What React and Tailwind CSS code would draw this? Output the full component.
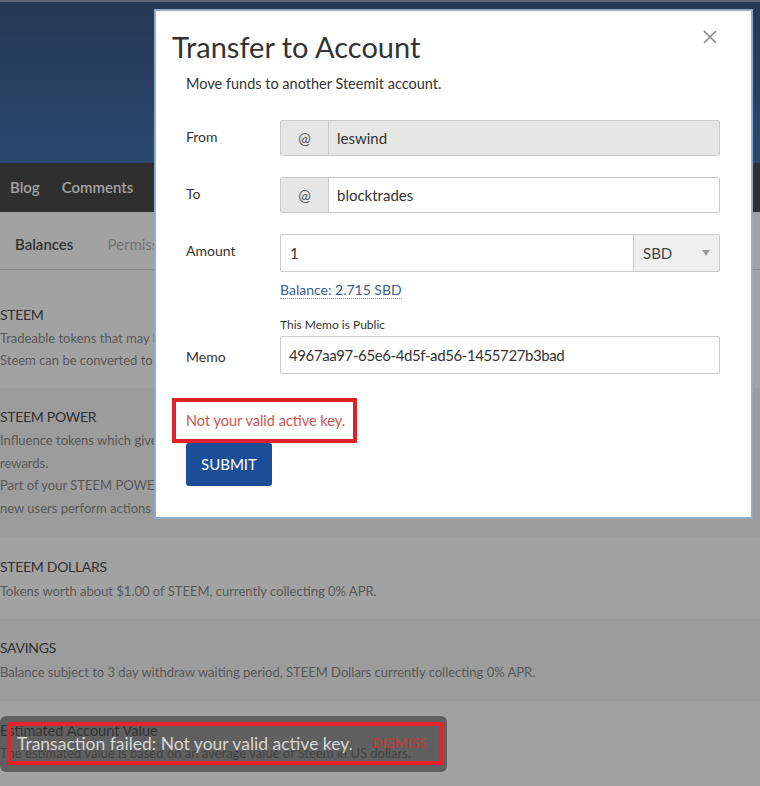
import React from "react";

function Row({ h, pt, dark, title, titleCls, lines, lh, mt }) {
  return (
    <div className={`${dark ? "bg-[#9c9c9c]" : "bg-[#a2a2a2]"} ${h} ${pt}`}>
      <div className={`${titleCls} leading-[20px] text-[#313131] whitespace-nowrap`}>{title}</div>
      <div className={`${mt} text-[13px] ${lh} text-[#585858] whitespace-nowrap`}>
        {lines.map((l, i) => (
          <div key={i}>{l}</div>
        ))}
      </div>
    </div>
  );
}

export default function App() {
  const caps = "text-[14px] tracking-[-0.3px]";
  return (
    <div className="relative w-[760px] h-[786px] overflow-hidden bg-[#a2a2a2] font-['Lato',sans-serif]">
      <header className="h-[163px] border-t-2 border-[#5f6773] bg-gradient-to-b from-[#243954] to-[#2a4870]" />
      <nav className="h-[49px] bg-[#2f2f2f] flex items-center gap-[22px] pl-[10px] text-[15px] font-semibold text-[#a3a3a3]">
        <span>Blog</span>
        <span>Comments</span>
      </nav>
      <div className="h-[58px] border-b border-[#8d8d8d] flex items-center gap-[34px] pl-[15px] pt-[7px] text-[15px]">
        <span className="font-semibold text-[#333]">Balances</span>
        <span className="text-[#737373]">Permissions</span>
      </div>
      <Row
        h="h-[118px]"
        pt="pt-[35px]"
        title="STEEM"
        titleCls={caps}
        mt="mt-[2px]"
        lh="leading-[22px]"
        lines={[
          "Tradeable tokens that may be transferred anywhere at anytime.",
          "Steem can be converted to STEEM POWER in a process called powering up.",
        ]}
      />
      <Row
        h="h-[150px]"
        pt="pt-[19px]"
        dark
        title="STEEM POWER"
        titleCls={caps}
        mt="mt-[2px]"
        lh="leading-[22.5px]"
        lines={[
          "Influence tokens which give you more control over post payouts and allow you to earn on curation",
          "rewards.",
          "Part of your STEEM POWER is currently delegated. Delegation is donated for influence or to help",
          "new users perform actions on steemit. Your delegation amount can fluctuate.",
        ]}
      />
      <Row
        h="h-[81px]"
        pt="pt-[19px]"
        title="STEEM DOLLARS"
        titleCls={caps}
        mt="mt-[3px]"
        lh="leading-[22px]"
        lines={["Tokens worth about $1.00 of STEEM, currently collecting 0% APR."]}
      />
      <Row
        h="h-[82px]"
        pt="pt-[19px]"
        dark
        title="SAVINGS"
        titleCls={caps}
        mt="mt-[3px]"
        lh="leading-[22px]"
        lines={["Balance subject to 3 day withdraw waiting period, STEEM Dollars currently collecting 0% APR."]}
      />
      <Row
        h="h-[90px]"
        pt="pt-[20px]"
        title="Estimated Account Value"
        titleCls="text-[14.5px]"
        mt="mt-[1px]"
        lh="leading-[22px]"
        lines={["The estimated value is based on an average value of Steem in US dollars."]}
      />

      {/* Modal */}
      <div className="absolute left-[154px] top-[9px] w-[599px] h-[510px] bg-white border-2 border-[#93abcb] pt-[18px] pl-[16px] pr-[31px]">
        <svg
          className="absolute right-[34px] top-[19px] w-[14px] h-[14px]"
          viewBox="0 0 14 14"
          fill="none"
          stroke="#8a8a8a"
          strokeWidth="1.6"
        >
          <path d="M1 1L13 13M13 1L1 13" />
        </svg>
        <h2 className="text-[29px] leading-[36px] text-[#333] font-normal">Transfer to Account</h2>
        <div className="pl-[14px]">
          <p className="mt-[9px] text-[14.5px] leading-[20px] text-[#333]">
            Move funds to another Steemit account.
          </p>

          <div className="mt-[26px] grid grid-cols-[94px_440px] items-center text-[14px] text-[#333]">
            <span className="-mt-[3px]">From</span>
            <div className="flex h-[36px] border border-[#cacaca] rounded-[2px] overflow-hidden">
              <span className="w-[48px] flex items-center justify-center bg-[#e6e6e6] border-r border-[#cacaca] text-[15px] text-[#555]">
                @
              </span>
              <span className="flex-1 flex items-center pl-[8px] bg-[#e6e6e6] text-[15px] text-[#333]">
                leswind
              </span>
            </div>
          </div>

          <div className="mt-[21px] grid grid-cols-[94px_440px] items-center text-[14px] text-[#333]">
            <span className="-mt-[3px]">To</span>
            <div className="flex h-[36px] border border-[#cacaca] rounded-[2px] overflow-hidden">
              <span className="w-[48px] flex items-center justify-center bg-[#e6e6e6] border-r border-[#cacaca] text-[15px] text-[#555]">
                @
              </span>
              <span className="flex-1 flex items-center pl-[8px] bg-white text-[15px] text-[#333]">
                blocktrades
              </span>
            </div>
          </div>

          <div className="mt-[21px] grid grid-cols-[94px_440px] items-center text-[14px] text-[#333]">
            <span className="-mt-[6px]">Amount</span>
            <div className="flex h-[38px] border border-[#cacaca] rounded-[2px] overflow-hidden">
              <span className="flex-1 flex items-center pl-[9px] bg-white text-[15px] text-[#333]">1</span>
              <span className="w-[86px] flex items-center justify-between pl-[9px] pr-[9px] bg-[#efefef] border-l border-[#cacaca] text-[15px] text-[#444]">
                SBD
                <svg width="8" height="6" viewBox="0 0 8 6">
                  <path d="M0 0H8L4 6Z" fill="#9a9a9a" />
                </svg>
              </span>
            </div>
          </div>

          <div className="grid grid-cols-[94px_440px]">
            <span />
            <div>
              <div className="mt-[8px] text-[14px] leading-[20px]">
                <span className="text-[#3a5f8f] border-b border-dotted border-[#8a8a8a]">Balance: 2.715 SBD</span>
              </div>
              <div className="mt-[17px] text-[12px] leading-[16px] text-[#333]">This Memo is Public</div>
            </div>
          </div>

          <div className="mt-[3px] grid grid-cols-[94px_440px] items-center text-[14px] text-[#333]">
            <span className="mt-[2px]">Memo</span>
            <div className="flex h-[38px] border border-[#cacaca] rounded-[2px] items-center pl-[8px] text-[15px] tracking-[-0.4px] text-[#333]">
              4967aa97-65e6-4d5f-ad56-1455727b3bad
            </div>
          </div>

          <div className="relative mt-[37px] h-[20px] text-[14.5px] leading-[20px] text-[#d4534e]">
            Not your valid active key.
            <div className="absolute left-[-14px] top-[-13px] w-[185px] h-[45px] border-4 border-[#e0202b]" />
          </div>

          <button className="mt-[12px] w-[86px] h-[43px] rounded-[3px] bg-[#1b4e98] text-white text-[15px]">
            SUBMIT
          </button>
        </div>
      </div>

      {/* Toast */}
      <div className="absolute left-0 top-[716px] w-[447px] h-[56px] rounded-[6px] bg-[#333]/60 flex items-center pl-[17px] pr-[20px] justify-between">
        <span className="text-[17.5px] text-[#d6d6d6]">Transaction failed: Not your valid active key.</span>
        <span className="text-[13px] font-bold tracking-[0.5px] text-[#b1403f]">DISMISS</span>
        <div className="absolute left-[7px] top-[6px] w-[436px] h-[43px] border-4 border-[#e8212b]" />
      </div>
    </div>
  );
}
